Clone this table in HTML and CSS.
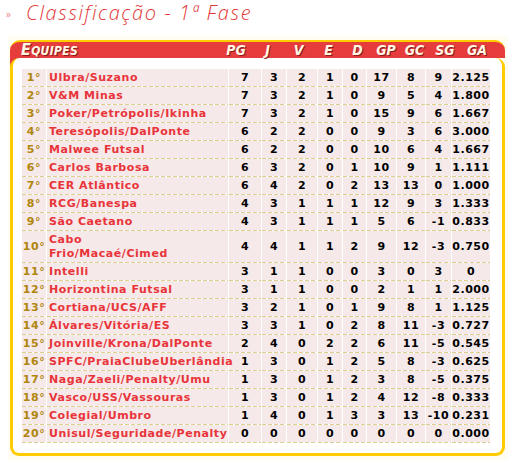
FILE: index.html
```html
<!DOCTYPE html>
<html lang="pt">
<head>
<meta charset="utf-8">
<title>Classificação - 1ª Fase</title>
<link rel="stylesheet" href="styles.css">
</head>
<body>
<h1 class="title"><span class="raquo">»</span>Classificação - 1ª Fase</h1>
<div class="frame">
  <div class="box">
    <div class="head">
      <span class="h-team"><span class="big">E</span>QUIPES</span>
      <span class="h-col w32">PG</span>
      <span class="h-col w31">J</span>
      <span class="h-col w31">V</span>
      <span class="h-col w29">E</span>
      <span class="h-col w29">D</span>
      <span class="h-col w28">GP</span>
      <span class="h-col w29">GC</span>
      <span class="h-col w32">SG</span>
      <span class="h-col w32">GA</span>
    </div>
    <div class="body-wrap">
      <div class="body">
        <table class="standings">
          <colgroup>
            <col class="c-pos"><col class="c-team"><col class="c-pg"><col class="c-j"><col class="c-v"><col class="c-e"><col class="c-d"><col class="c-gp"><col class="c-gc"><col class="c-sg"><col class="c-ga">
          </colgroup>
          <tbody>
            <tr><td class="pos">1°</td><td class="team">Ulbra/Suzano</td><td>7</td><td>3</td><td>2</td><td>1</td><td>0</td><td>17</td><td>8</td><td>9</td><td class="last">2.125</td></tr>
            <tr><td class="pos">2°</td><td class="team">V&amp;M Minas</td><td>7</td><td>3</td><td>2</td><td>1</td><td>0</td><td>9</td><td>5</td><td>4</td><td class="last">1.800</td></tr>
            <tr><td class="pos">3°</td><td class="team">Poker/Petrópolis/Ikinha</td><td>7</td><td>3</td><td>2</td><td>1</td><td>0</td><td>15</td><td>9</td><td>6</td><td class="last">1.667</td></tr>
            <tr><td class="pos">4°</td><td class="team">Teresópolis/DalPonte</td><td>6</td><td>2</td><td>2</td><td>0</td><td>0</td><td>9</td><td>3</td><td>6</td><td class="last">3.000</td></tr>
            <tr><td class="pos">5°</td><td class="team">Malwee Futsal</td><td>6</td><td>2</td><td>2</td><td>0</td><td>0</td><td>10</td><td>6</td><td>4</td><td class="last">1.667</td></tr>
            <tr><td class="pos">6°</td><td class="team">Carlos Barbosa</td><td>6</td><td>3</td><td>2</td><td>0</td><td>1</td><td>10</td><td>9</td><td>1</td><td class="last">1.111</td></tr>
            <tr><td class="pos">7°</td><td class="team">CER Atlântico</td><td>6</td><td>4</td><td>2</td><td>0</td><td>2</td><td>13</td><td>13</td><td>0</td><td class="last">1.000</td></tr>
            <tr><td class="pos">8°</td><td class="team">RCG/Banespa</td><td>4</td><td>3</td><td>1</td><td>1</td><td>1</td><td>12</td><td>9</td><td>3</td><td class="last">1.333</td></tr>
            <tr><td class="pos">9°</td><td class="team">São Caetano</td><td>4</td><td>3</td><td>1</td><td>1</td><td>1</td><td>5</td><td>6</td><td>-1</td><td class="last">0.833</td></tr>
            <tr><td class="pos">10°</td><td class="team">Cabo<br>Frio/Macaé/Cimed</td><td>4</td><td>4</td><td>1</td><td>1</td><td>2</td><td>9</td><td>12</td><td>-3</td><td class="last">0.750</td></tr>
            <tr><td class="pos">11°</td><td class="team">Intelli</td><td>3</td><td>1</td><td>1</td><td>0</td><td>0</td><td>3</td><td>0</td><td>3</td><td class="last">0</td></tr>
            <tr><td class="pos">12°</td><td class="team">Horizontina Futsal</td><td>3</td><td>1</td><td>1</td><td>0</td><td>0</td><td>2</td><td>1</td><td>1</td><td class="last">2.000</td></tr>
            <tr><td class="pos">13°</td><td class="team">Cortiana/UCS/AFF</td><td>3</td><td>2</td><td>1</td><td>0</td><td>1</td><td>9</td><td>8</td><td>1</td><td class="last">1.125</td></tr>
            <tr><td class="pos">14°</td><td class="team">Álvares/Vitória/ES</td><td>3</td><td>3</td><td>1</td><td>0</td><td>2</td><td>8</td><td>11</td><td>-3</td><td class="last">0.727</td></tr>
            <tr><td class="pos">15°</td><td class="team">Joinville/Krona/DalPonte</td><td>2</td><td>4</td><td>0</td><td>2</td><td>2</td><td>6</td><td>11</td><td>-5</td><td class="last">0.545</td></tr>
            <tr><td class="pos">16°</td><td class="team">SPFC/PraiaClubeUberlândia</td><td>1</td><td>3</td><td>0</td><td>1</td><td>2</td><td>5</td><td>8</td><td>-3</td><td class="last">0.625</td></tr>
            <tr><td class="pos">17°</td><td class="team">Naga/Zaeli/Penalty/Umu</td><td>1</td><td>3</td><td>0</td><td>1</td><td>2</td><td>3</td><td>8</td><td>-5</td><td class="last">0.375</td></tr>
            <tr><td class="pos">18°</td><td class="team">Vasco/USS/Vassouras</td><td>1</td><td>3</td><td>0</td><td>1</td><td>2</td><td>4</td><td>12</td><td>-8</td><td class="last">0.333</td></tr>
            <tr><td class="pos">19°</td><td class="team">Colegial/Umbro</td><td>1</td><td>4</td><td>0</td><td>1</td><td>3</td><td>3</td><td>13</td><td>-10</td><td class="last">0.231</td></tr>
            <tr><td class="pos">20°</td><td class="team">Unisul/Seguridade/Penalty</td><td>0</td><td>0</td><td>0</td><td>0</td><td>0</td><td>0</td><td>0</td><td>0</td><td class="last">0.000</td></tr>
          </tbody>
        </table>
      </div>
    </div>
  </div>
</div>
</body>
</html>
```

FILE: styles.css
```css
html, body {
  margin: 0;
  padding: 0;
  background: #ffffff;
}

.title {
  margin: 0;
  padding-left: 6px;
  height: 26px;
  line-height: 26px;
  font-family: "Open Sans", "DejaVu Sans", sans-serif;
  font-style: italic;
  font-weight: 300;
  font-size: 20px;
  letter-spacing: 1.6px;
  color: #e23838;
  white-space: nowrap;
}

.raquo {
  display: inline-block;
  width: 20px;
  font-size: 11px;
  font-style: normal;
  letter-spacing: 0;
  vertical-align: 2px;
}

.frame {
  margin: 10px 0 0 8px;
  width: 495px;
  padding: 4px 3px 4px 2px;
  background: #fffcf2;
}

.box {
  width: 495px;
}

.head {
  display: flex;
  align-items: center;
  height: 16px;
  background: #e63c3c;
  border-top: 2px solid #ffcc00;
  border-radius: 10px 10px 0 0;
  padding: 0 12px 0 11px;
  font-family: "DejaVu Sans Condensed", "DejaVu Sans", sans-serif;
  font-stretch: condensed;
  font-weight: bold;
  font-style: italic;
  color: #fff8e6;
  text-shadow: 1px 1px 0 #8c1c1c;
  font-size: 14px;
  line-height: 16px;
}

.h-team {
  flex: 1;
  font-size: 12px;
  letter-spacing: 0.3px;
}

.h-team .big {
  font-size: 16px;
}

.h-col {
  text-align: center;
}

.w28 { width: 28px; }
.w29 { width: 29px; }
.w31 { width: 31px; }
.w32 { width: 32px; }

.body-wrap {
  background: linear-gradient(#e63c3c, #e63c3c) left top / 14px 10px no-repeat;
}

.body {
  background: #ffffff;
  border: 3px solid #ffcc00;
  border-top: 0;
  border-radius: 9px;
  padding: 11px 12px 10px 9px;
}

.standings {
  width: 468px;
  table-layout: fixed;
  border-collapse: separate;
  border-spacing: 0;
  font-family: "DejaVu Sans", Verdana, sans-serif;
  font-weight: bold;
  font-size: 11px;
  letter-spacing: 0.55px;
  line-height: 14px;
  color: #000000;
}

.c-pos { width: 25px; }
.c-team { width: 182px; }
.c-pg { width: 33px; }
.c-j { width: 25px; }
.c-v { width: 31px; }
.c-e { width: 25px; }
.c-d { width: 24px; }
.c-gp { width: 30px; }
.c-gc { width: 29px; }
.c-sg { width: 26px; }
.c-ga { width: 38px; }

.standings td {
  padding: 2px 0 2px 0;
  text-align: center;
  border-right: 1px solid #ffffff;
  background:
    linear-gradient(to right, #dcd08e 4px, #ffffff 4px) left bottom / 6px 1px repeat-x,
    linear-gradient(#f5e9e9, #f5e9e9) left top / 100% calc(100% - 1px) no-repeat;
  white-space: nowrap;
}

.standings td.last {
  border-right: 0;
}

.standings td.team {
  text-align: left;
  padding-left: 2px;
  color: #e8343a;
  white-space: normal;
}

.standings td.pos {
  color: #b0860e;
}
```
